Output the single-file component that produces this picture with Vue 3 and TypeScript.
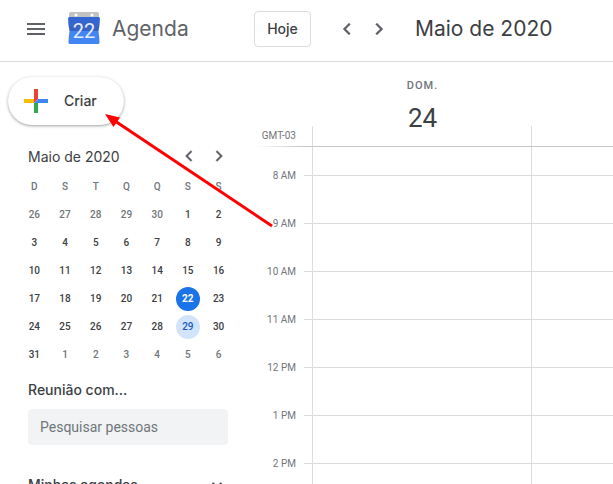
<script setup lang="ts">
interface Day {
  n: number
  other: boolean
  today: boolean
  selected: boolean
}

const weekdays: string[] = ['D', 'S', 'T', 'Q', 'Q', 'S', 'S']
const hours: string[] = ['8 AM', '9 AM', '10 AM', '11 AM', '12 PM', '1 PM', '2 PM']

// Six weeks, starting on Sunday 26 April 2020
const weeks: Day[][] = Array.from({ length: 6 }, (_, w) =>
  Array.from({ length: 7 }, (_, d) => {
    const date = new Date(2020, 3, 26 + w * 7 + d)
    const inMonth = date.getMonth() === 4
    const n = date.getDate()
    return { n, other: !inMonth, today: inMonth && n === 22, selected: inMonth && n === 29 }
  })
)
</script>

<template>
  <div class="app">
    <header class="topbar">
      <button class="icon-btn menu" aria-label="Menu">
        <svg width="24" height="24" viewBox="0 0 24 24"><path d="M3 6h18v2H3zM3 11h18v2H3zM3 16h18v2H3z" fill="#5f6368" /></svg>
      </button>
      <a class="brand" href="#">
        <svg class="logo" width="34" height="34" viewBox="0 0 34 34" aria-hidden="true">
          <defs>
            <linearGradient id="logoTop" x1="0" y1="0" x2="0" y2="1">
              <stop offset="0" stop-color="#3367d6" />
              <stop offset="1" stop-color="#3a62c0" />
            </linearGradient>
          </defs>
          <path d="M4 0h26a2 2 0 0 1 2 2v4H2V2a2 2 0 0 1 2-2z" fill="#c2c2c2" />
          <circle cx="9" cy="3" r="1.500" fill="#fff" />
          <circle cx="25" cy="3" r="1.500" fill="#fff" />
          <path d="M2.500 5h29Q33 5 33 6.500Q32.800 13 31.500 19h-29Q1.200 13 1 6.500Q1 5 2.500 5z" fill="url(#logoTop)" />
          <path d="M2.500 19h29Q32.400 25 32.500 30.500Q32.500 32 31 32h-28Q1.500 32 1.500 30.500Q1.600 25 2.500 19z" fill="#4285f4" />
          <text x="17" y="26" text-anchor="middle" class="logo-num">22</text>
        </svg>
        <span>Agenda</span>
      </a>
      <button class="today">Hoje</button>
      <nav class="pager" aria-label="Período">
        <button class="icon-btn" aria-label="Anterior">
          <svg width="24" height="24" viewBox="0 0 24 24"><path d="M15.410 7.410 14 6l-6 6 6 6 1.410-1.410L10.830 12z" fill="#5f6368" stroke="#5f6368" stroke-width=".3" /></svg>
        </button>
        <button class="icon-btn" aria-label="Próximo">
          <svg width="24" height="24" viewBox="0 0 24 24"><path d="M10 6 8.590 7.410 13.170 12l-4.580 4.590L10 18l6-6z" fill="#5f6368" stroke="#5f6368" stroke-width=".3" /></svg>
        </button>
      </nav>
      <h1 class="period">Maio de 2020</h1>
    </header>

    <div class="content">
      <aside class="sidebar">
        <button class="create">
          <svg width="24" height="24" viewBox="0 0 24 24" aria-hidden="true">
            <path d="M10 0h4v10l-4 4z" fill="#ea4335" />
            <path d="M0 10h10v4H0z" fill="#fbbc04" />
            <path d="M10 14h4v10h-4z" fill="#34a853" />
            <path d="M14 10h10v4H10z" fill="#4285f4" />
          </svg>
          <span>Criar</span>
        </button>

        <section class="mini">
          <div class="mini-head">
            <h2>Maio de 2020</h2>
            <button class="icon-btn" aria-label="Mês anterior">
              <svg width="22" height="22" viewBox="0 0 24 24"><path d="M15.410 7.410 14 6l-6 6 6 6 1.410-1.410L10.830 12z" fill="#5f6368" stroke="#5f6368" stroke-width=".3" /></svg>
            </button>
            <button class="icon-btn" aria-label="Próximo mês">
              <svg width="22" height="22" viewBox="0 0 24 24"><path d="M10 6 8.590 7.410 13.170 12l-4.580 4.590L10 18l6-6z" fill="#5f6368" stroke="#5f6368" stroke-width=".3" /></svg>
            </button>
          </div>
          <table>
            <thead>
              <tr><th v-for="(d, i) in weekdays" :key="i" scope="col">{{ d }}</th></tr>
            </thead>
            <tbody>
              <tr v-for="(week, w) in weeks" :key="w">
                <td v-for="(day, d) in week" :key="d">
                  <span class="day" :class="{ other: day.other, current: day.today, selected: day.selected }">{{ day.n }}</span>
                </td>
              </tr>
            </tbody>
          </table>
        </section>

        <section class="people">
          <label for="people">Reunião com...</label>
          <input id="people" type="text" placeholder="Pesquisar pessoas" />
        </section>

        <button class="group">
          <span>Minhas agendas</span>
          <svg width="20" height="20" viewBox="0 0 24 24" aria-hidden="true"><path d="M7.410 8.590 12 13.170l4.590-4.580L18 10l-6 6-6-6z" fill="#3c4043" /></svg>
        </button>
      </aside>

      <main class="week">
        <div class="week-head">
          <span class="zone">GMT-03</span>
          <div class="date">
            <span class="dow">DOM.</span>
            <span class="num">24</span>
          </div>
          <div class="date"></div>
        </div>
        <div class="hours">
          <div v-for="h in hours" :key="h" class="hour">
            <span class="time">{{ h }}</span>
            <span class="tick"></span>
            <span class="slot"></span>
            <span class="slot"></span>
          </div>
        </div>
      </main>
    </div>

    <svg class="pointer" width="172" height="116" viewBox="0 0 172 116" aria-hidden="true">
      <path d="M10 7 167 112" stroke="#f00" stroke-width="3" />
      <path d="M0 0 15 3.500 8.500 13z" fill="#f00" />
    </svg>
  </div>
</template>

<style>
body {
  margin: 0;
  background: #fff;
}
</style>

<style scoped>
.app {
  position: relative;
  display: flex;
  flex-direction: column;
  height: 100vh;
  overflow: hidden;
  font-family: Roboto, "Liberation Sans", sans-serif;
  color: #3c4043;
}
button {
  font: inherit;
  color: inherit;
  background: none;
  border: 0;
  padding: 0;
  cursor: pointer;
}
h1,
h2 {
  margin: 0;
  font-weight: 400;
}
.icon-btn {
  display: flex;
  align-items: center;
  justify-content: center;
}
.topbar {
  display: flex;
  align-items: center;
  flex: none;
  height: 57px;
  padding: 0 24px 4px;
  border-bottom: 1px solid #dadce0;
  white-space: nowrap;
}
.brand,
.today,
.period,
.create,
.mini-head h2,
.people label,
.group {
  font-family: Inter, Roboto, sans-serif;
}
.brand {
  display: flex;
  align-items: center;
  gap: 11px;
  width: 187px;
  margin-left: 19px;
  color: #5f6368;
  font-size: 21px;
  line-height: 28px;
  text-decoration: none;
}
.logo-num {
  font-family: Roboto, sans-serif;
  font-size: 20px;
  fill: #e6ecfa;
}
.today {
  width: 57px;
  height: 36px;
  box-sizing: border-box;
  border: 1px solid #dadce0;
  border-radius: 4px;
  font-size: 14px;
  font-weight: 500;
}
.pager {
  display: flex;
  margin-left: 20px;
}
.pager .icon-btn {
  width: 32px;
  height: 32px;
}
.period {
  margin-left: 20px;
  font-size: 21px;
  line-height: 28px;
}
.content {
  display: flex;
  flex: 1;
  min-height: 0;
}
.sidebar {
  flex: none;
  width: 256px;
  box-sizing: border-box;
  padding-top: 15px;
}
.create {
  display: flex;
  align-items: center;
  gap: 16px;
  height: 48px;
  margin-left: 8px;
  padding: 0 27px 0 16px;
  border-radius: 24px;
  box-shadow: 0 1px 2px rgba(60, 64, 67, 0.3), 0 1px 3px 1px rgba(60, 64, 67, 0.15);
  font-size: 14px;
  font-weight: 500;
}
.create span {
  padding-bottom: 2px;
}
.mini {
  padding: 17px 22px 0 19px;
}
.mini-head {
  display: flex;
  align-items: center;
  height: 28px;
  padding-left: 9px;
}
.mini-head h2 {
  flex: 1;
  font-size: 14px;
}
.mini-head .icon-btn {
  width: 30px;
  height: 28px;
}
table {
  width: 100%;
  table-layout: fixed;
  border-collapse: collapse;
  margin-top: 3px;
}
th,
td {
  height: 28px;
  padding: 0;
  text-align: center;
  font-size: 10px;
  font-weight: 500;
  line-height: 24px;
}
th {
  color: #70757a;
}
.day {
  display: block;
  width: 24px;
  height: 24px;
  margin: 0 auto;
  border-radius: 50%;
}
.other {
  color: #70757a;
}
.current {
  color: #fff;
  background: #1a73e8;
  font-weight: 700;
}
.selected {
  color: #185abc;
  background: #d2e3fc;
}
.people {
  display: flex;
  flex-direction: column;
  gap: 9px;
  padding: 11px 28px 0;
}
.people label,
.group {
  font-size: 14px;
  font-weight: 500;
  line-height: 20px;
}
.people input {
  height: 36px;
  box-sizing: border-box;
  padding: 0 12px;
  border: 0;
  border-radius: 4px;
  background: #f1f3f4;
  font-family: inherit;
  font-size: 14px;
}
.people input::placeholder {
  color: #70757a;
  opacity: 1;
}
.group {
  display: flex;
  justify-content: space-between;
  align-items: center;
  width: 100%;
  padding: 30px 29px 0 28px;
}
.week {
  flex: 1;
  min-width: 0;
}
.week-head,
.hour {
  display: grid;
  grid-template-columns: 48px 8px 219px 1fr;
}
.week-head {
  height: 84px;
  border-bottom: 1px solid;
  border-image: linear-gradient(to right, transparent, #c4c7c5 48px) 1;
}
.zone {
  align-self: end;
  padding: 0 8px 3px 0;
  text-align: right;
  white-space: nowrap;
  font-size: 10px;
  line-height: 14px;
  color: #70757a;
}
.date {
  display: flex;
  flex-direction: column;
  align-items: center;
  padding: 16px 0 0 2px;
  background: linear-gradient(#dadce0, #dadce0) left bottom / 1px 20px no-repeat;
}
.date:nth-child(2) {
  grid-column: 3;
}
.dow {
  font-size: 11px;
  font-weight: 500;
  line-height: 16px;
  letter-spacing: 1px;
  color: #70757a;
}
.num {
  margin-top: 8px;
  font-size: 26px;
  line-height: 32px;
}
.hour {
  height: 48px;
}
.hour:first-child {
  height: 29px;
}
.time {
  align-self: end;
  padding-right: 8px;
  margin-bottom: -6px;
  text-align: right;
  white-space: nowrap;
  font-size: 10px;
  line-height: 12px;
  color: #70757a;
}
.tick {
  border-bottom: 1px solid #dadce0;
}
.slot {
  border-left: 1px solid #dadce0;
  border-bottom: 1px solid #dadce0;
}
.hours::after {
  content: "";
  display: block;
  height: 48px;
  margin-left: 56px;
  border-left: 1px solid #dadce0;
  background: linear-gradient(#dadce0, #dadce0) 218px 0 / 1px 100% no-repeat;
}
.pointer {
  position: absolute;
  left: 105px;
  top: 114px;
  pointer-events: none;
}
</style>
